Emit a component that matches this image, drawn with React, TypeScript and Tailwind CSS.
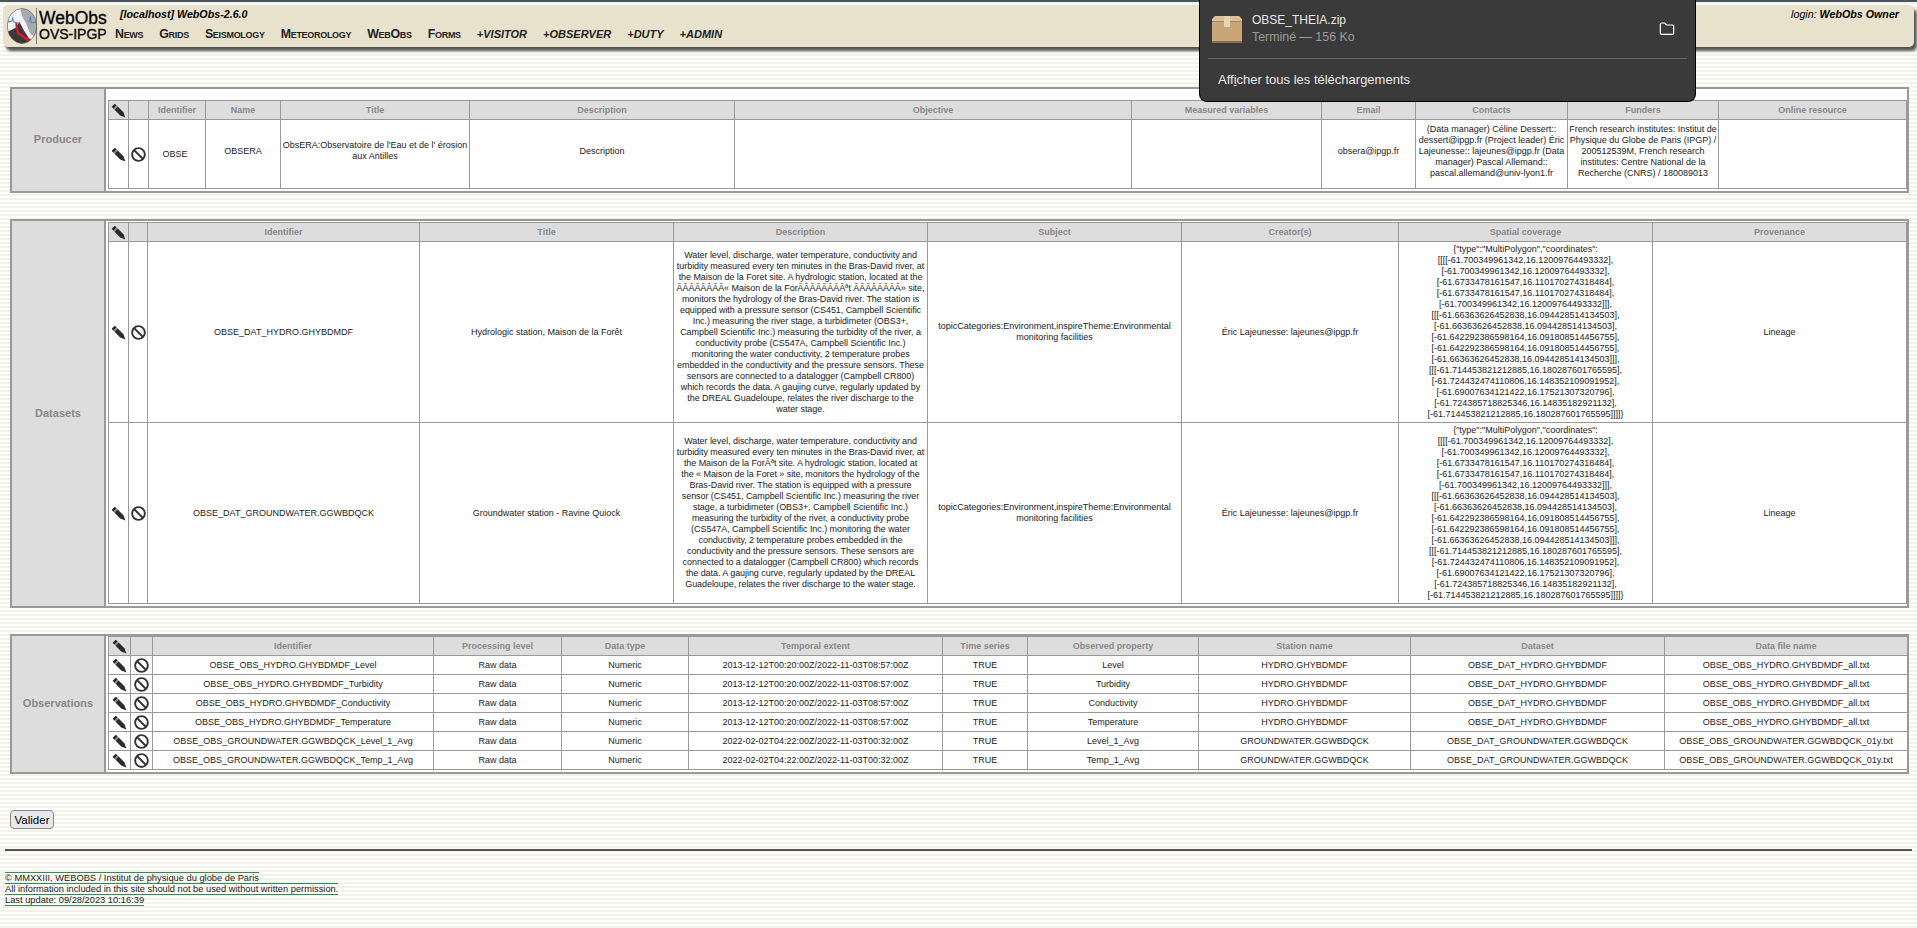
import React from 'react';
import { FaBan } from 'react-icons/fa';
import { Folder } from 'lucide-react';

const CELL = 'border border-[#999] px-[1px] py-0 text-center align-middle';
const NUDGED = 'border border-[#999] px-[1px] pt-0 pb-[6px] text-center align-middle';
const LONG = 'border border-[#999] px-[2px] py-0 text-center align-middle tracking-[-0.06px]';
const HEAD = 'border border-[#999] bg-[#ddd] px-[1px] py-0 text-center align-middle font-bold text-[#888] h-[19px]';

function Edit() {
  return (
    <svg viewBox="0 0 16 16" className="mx-auto block h-[15px] w-[15px]">
      <path d="M4.1 0.7 L0.7 4.1 L2.6 6 L6 2.6 Z" fill="#222" />
      <path d="M6 2.6 L2.6 6 L3.8 7.2 L7.2 3.8 Z" fill="#888" />
      <path d="M7.2 3.8 L3.8 7.2 L9.8 13.2 L15.4 15.4 L13.2 9.8 Z" fill="#2b2b2b" />
    </svg>
  );
}

function Del() {
  return <FaBan className="mx-auto text-[#333]" size={15} />;
}

function Logo() {
  return (
    <svg viewBox="0 0 36 36" className="h-[36px] w-[30px] shrink-0" preserveAspectRatio="none">
      <defs>
        <clipPath id="lg">
          <circle cx="18" cy="18" r="17.5" />
        </clipPath>
      </defs>
      <g clipPath="url(#lg)">
        <rect width="36" height="36" fill="#f4f4f4" />
        <path d="M16 0 L36 0 L36 30 L28 26 L22 14 L18 8 Z" fill="#aaa" />
        <path d="M1 14 L6 13 L7 10 L8 14 L14 15 M25 14 L27 13 L28 8 L29 15 L36 14" fill="none" stroke="#3b8ad8" strokeWidth="1.1" />
        <path d="M0 36 L0 24 L10 20 L15 14 L20 22 L26 30 L36 36 Z" fill="#3a3a3a" />
        <path d="M11 15 L13 25 L27 33" fill="none" stroke="#e0152b" strokeWidth="2.6" />
      </g>
      <circle cx="18" cy="18" r="17.5" fill="none" stroke="#555" strokeWidth="0.7" />
      <rect x="35" y="0" width="1" height="36" fill="#666" />
    </svg>
  );
}

function ZipBox() {
  return (
    <svg viewBox="0 0 30 27" className="h-[27px] w-[30px] shrink-0">
      <path d="M3 0 H27 L30 5 V27 H0 V5 Z" fill="#c9a678" />
      <path d="M0 5 H30 V3 L27 0 H3 L0 3 Z" fill="#dcc09a" />
      <rect x="0" y="5" width="30" height="1" fill="#a98a60" />
      <rect x="12" y="0" width="6" height="11" fill="#e6d4b8" />
      <rect x="0" y="25" width="30" height="2" fill="#8c6f49" />
    </svg>
  );
}

function Section({ label, tall, children }: { label: string; tall: string; children: React.ReactNode }) {
  return (
    <div className={`flex ${tall}`}>
      <div className="flex w-[96px] shrink-0 items-center justify-center border-2 border-[#999] bg-[#ddd] pb-[1px] text-[11px] font-bold text-[#888]">
        {label}
      </div>
      <div className="flex min-w-0 flex-1 flex-col justify-end border-y-2 border-r-2 border-[#999] bg-white px-[2px] pb-[2px]">
        {children}
      </div>
    </div>
  );
}

const producerCols = ['w-[20px]', 'w-[20px]', 'w-[57px]', 'w-[75px]', 'w-[189px]', 'w-[265px]', 'w-[397px]', 'w-[190px]', 'w-[94px]', 'w-[152px]', 'w-[151px]', 'w-[188px]'];
const producerHead = ['Identifier', 'Name', 'Title', 'Description', 'Objective', 'Measured variables', 'Email', 'Contacts', 'Funders', 'Online resource'];

const datasetCols = ['w-[20px]', 'w-[19px]', 'w-[272px]', 'w-[254px]', 'w-[254px]', 'w-[254px]', 'w-[217px]', 'w-[254px]', 'w-[254px]'];
const datasetHead = ['Identifier', 'Title', 'Description', 'Subject', 'Creator(s)', 'Spatial coverage', 'Provenance'];

const coverage = (
  <>
    {'{"type":"MultiPolygon","coordinates":'}
    <br />[[[[-61.700349961342,16.12009764493332],
    <br />[-61.700349961342,16.12009764493332],
    <br />[-61.6733478161547,16.110170274318484],
    <br />[-61.6733478161547,16.110170274318484],
    <br />[-61.700349961342,16.12009764493332]]],
    <br />[[[-61.66363626452838,16.094428514134503],
    <br />[-61.66363626452838,16.094428514134503],
    <br />[-61.642292386598164,16.091808514456755],
    <br />[-61.642292386598164,16.091808514456755],
    <br />[-61.66363626452838,16.094428514134503]]],
    <br />[[[-61.714453821212885,16.180287601765595],
    <br />[-61.724432474110806,16.148352109091952],
    <br />[-61.69007634121422,16.17521307320796],
    <br />[-61.724385718825346,16.14835182921132],
    <br />[-61.714453821212885,16.180287601765595]]]]{'}'}
  </>
);

const datasets = [
  {
    id: 'OBSE_DAT_HYDRO.GHYBDMDF',
    title: 'Hydrologic station, Maison de la Forêt',
    desc: 'Water level, discharge, water temperature, conductivity and turbidity measured every ten minutes in the Bras-David river, at the Maison de la Foret site. A hydrologic station, located at the ÃÂÃÂÃÂÃÂ« Maison de la ForÃÂÃÂÃÂÃÂªt ÃÂÃÂÃÂÃÂ» site, monitors the hydrology of the Bras-David river. The station is equipped with a pressure sensor (CS451, Campbell Scientific Inc.) measuring the river stage, a turbidimeter (OBS3+, Campbell Scientific Inc.) measuring the turbidity of the river, a conductivity probe (CS547A, Campbell Scientific Inc.) monitoring the water conductivity, 2 temperature probes embedded in the conductivity and the pressure sensors. These sensors are connected to a datalogger (Campbell CR800) which records the data. A gaujing curve, regularly updated by the DREAL Guadeloupe, relates the river discharge to the water stage.',
  },
  {
    id: 'OBSE_DAT_GROUNDWATER.GGWBDQCK',
    title: 'Groundwater station - Ravine Quiock',
    desc: (
      <>
        Water level, discharge, water temperature, conductivity and turbidity measured every ten minutes in the Bras-David river, at the Maison de la ForÃªt site. A hydrologic station, located at
        <br />
        the « Maison de la Foret » site, monitors the hydrology of the Bras-David river. The station is equipped with a pressure sensor (CS451, Campbell Scientific Inc.) measuring the river stage, a turbidimeter (OBS3+, Campbell Scientific Inc.) measuring the turbidity of the river, a conductivity probe (CS547A, Campbell Scientific Inc.) monitoring the water conductivity, 2 temperature probes embedded in the conductivity and the pressure sensors. These sensors are connected to a datalogger (Campbell CR800) which records the data. A gaujing curve, regularly updated by the DREAL Guadeloupe, relates the river discharge to the water stage.
      </>
    ),
  },
];

const obsCols = ['w-[22px]', 'w-[22px]', 'w-[281px]', 'w-[128px]', 'w-[127px]', 'w-[254px]', 'w-[85px]', 'w-[171px]', 'w-[212px]', 'w-[254px]', 'w-[243px]'];
const obsHead = ['Identifier', 'Processing level', 'Data type', 'Temporal extent', 'Time series', 'Observed property', 'Station name', 'Dataset', 'Data file name'];

const hydro = ['HYDRO.GHYBDMDF', 'OBSE_DAT_HYDRO.GHYBDMDF', 'OBSE_OBS_HYDRO.GHYBDMDF_all.txt'];
const ground = ['GROUNDWATER.GGWBDQCK', 'OBSE_DAT_GROUNDWATER.GGWBDQCK', 'OBSE_OBS_GROUNDWATER.GGWBDQCK_01y.txt'];
const t1 = '2013-12-12T00:20:00Z/2022-11-03T08:57:00Z';
const t3 = '2022-02-02T04:22:00Z/2022-11-03T00:32:00Z';

const observations = [
  ['OBSE_OBS_HYDRO.GHYBDMDF_Level', t1, 'Level', hydro],
  ['OBSE_OBS_HYDRO.GHYBDMDF_Turbidity', t1, 'Turbidity', hydro],
  ['OBSE_OBS_HYDRO.GHYBDMDF_Conductivity', t1, 'Conductivity', hydro],
  ['OBSE_OBS_HYDRO.GHYBDMDF_Temperature', t1, 'Temperature', hydro],
  ['OBSE_OBS_GROUNDWATER.GGWBDQCK_Level_1_Avg', t3, 'Level_1_Avg', ground],
  ['OBSE_OBS_GROUNDWATER.GGWBDQCK_Temp_1_Avg', t3, 'Temp_1_Avg', ground],
] as const;

const menu = ['News', 'Grids', 'Seismology', 'Meteorology', 'WebObs', 'Forms'];
const plus = ['+VISITOR', '+OBSERVER', '+DUTY', '+ADMIN'];

export default function App() {
  return (
    <div className="relative min-h-[928px] overflow-hidden bg-[repeating-linear-gradient(180deg,#ffffff_0px,#ffffff_2px,#f2f2e8_2px,#f2f2e8_4px)] font-['Liberation_Sans',Arial,sans-serif] text-[9px] leading-[11px] text-[#222]">
      <div className="h-[2px] bg-[#4c5660]" />

      {/* header */}
      <div className="mx-[3px] mt-[3px] flex h-[42px] items-center rounded-[5px] bg-[#e8e2cd] pr-[15px] pl-[4px] shadow-[3px_4px_3px_#555]">
        <Logo />
        <div className="ml-[2px] flex w-[70px] shrink-0 flex-col whitespace-nowrap text-black">
          <span className="text-[17.5px] leading-[17px] [-webkit-text-stroke:0.3px_black]">WebObs</span>
          <span className="text-[14px] leading-[15px] [-webkit-text-stroke:0.3px_black]">OVS-IPGP</span>
        </div>
        <div className="ml-[6px] flex h-full flex-col pt-[3px]">
          <div className="ml-[5px] text-[10.7px] leading-[13px] font-bold text-black italic">[localhost] WebObs-2.6.0</div>
          <div className="mt-[6px] flex gap-[16px] leading-[14px] font-bold text-[#222]">
            {menu.map(m => (
              <span key={m} className="text-[12.4px] tracking-[-0.3px] [font-variant:small-caps]">{m}</span>
            ))}
            {plus.map(m => (
              <span key={m} className="text-[11px] italic">{m}</span>
            ))}
          </div>
        </div>
        <div className="mb-auto ml-auto pt-[3px] text-[10.7px] leading-[13px] text-black italic">
          login: <b>WebObs Owner</b>
        </div>
      </div>

      {/* download panel */}
      <div className="absolute top-0 left-[1199px] h-[102px] w-[497px] rounded-b-[8px] border border-t-0 border-black bg-[#3a3a3a] text-[#e8e8e8]">
        <div className="flex h-[58px] items-center pr-[20px] pl-[12px]">
          <ZipBox />
          <div className="ml-[10px] flex-1">
            <div className="text-[12px] leading-[16px]">OBSE_THEIA.zip</div>
            <div className="text-[12.4px] leading-[18px] text-[#9a9a9a]">Terminé — 156 Ko</div>
          </div>
          <Folder size={16} strokeWidth={1.8} className="text-white" />
        </div>
        <div className="mx-[8px] border-t border-[#666]" />
        <div className="pt-[13px] pl-[18px] text-[13px] leading-[16px]">
          Aff<span className="underline">i</span>cher tous les téléchargements
        </div>
      </div>

      <main className="flex flex-col gap-[26px] pt-[40px] pr-[8px] pl-[10px]">
        <Section label="Producer" tall="h-[106px]">
          <table className="w-full table-fixed border-collapse">
            <colgroup>
              {producerCols.map((c, i) => <col key={i} className={c} />)}
            </colgroup>
            <thead>
              <tr>
                <th className={HEAD}><Edit /></th>
                <th className={HEAD} />
                {producerHead.map(h => <th key={h} className={HEAD}>{h}</th>)}
              </tr>
            </thead>
            <tbody>
              <tr className="h-[69px]">
                <td className={CELL}><Edit /></td>
                <td className={CELL}><Del /></td>
                <td className="border border-[#999] py-0 pr-[4px] pl-0 text-center align-middle">OBSE</td>
                <td className={NUDGED}>OBSERA</td>
                <td className={NUDGED}>ObsERA:Observatoire de l'Eau et de l' érosion aux Antilles</td>
                <td className={NUDGED}>Description</td>
                <td className={CELL} />
                <td className={CELL} />
                <td className={NUDGED}>obsera@ipgp.fr</td>
                <td className={NUDGED}>(Data manager) Céline Dessert:: dessert@ipgp.fr (Project leader) Éric Lajeunesse:: lajeunes@ipgp.fr (Data manager) Pascal Allemand:: pascal.allemand@univ-lyon1.fr</td>
                <td className={NUDGED}>French research institutes: Institut de Physique du Globe de Paris (IPGP) / 200512539M, French research institutes: Centre National de la Recherche (CNRS) / 180089013</td>
                <td className={CELL} />
              </tr>
            </tbody>
          </table>
        </Section>

        <Section label="Datasets" tall="h-[389px]">
          <table className="w-full table-fixed border-collapse">
            <colgroup>
              {datasetCols.map((c, i) => <col key={i} className={c} />)}
            </colgroup>
            <thead>
              <tr>
                <th className={HEAD}><Edit /></th>
                <th className={HEAD} />
                {datasetHead.map(h => <th key={h} className={HEAD}>{h}</th>)}
              </tr>
            </thead>
            <tbody>
              {datasets.map(d => (
                <tr key={d.id} className="h-[181px]">
                  <td className={CELL}><Edit /></td>
                  <td className={CELL}><Del /></td>
                  <td className={CELL}>{d.id}</td>
                  <td className={CELL}>{d.title}</td>
                  <td className={LONG}>{d.desc}</td>
                  <td className={CELL}>topicCategories:Environment,inspireTheme:Environmental monitoring facilities</td>
                  <td className={CELL}>Éric Lajeunesse: lajeunes@ipgp.fr</td>
                  <td className={CELL}>{coverage}</td>
                  <td className={CELL}>Lineage</td>
                </tr>
              ))}
            </tbody>
          </table>
        </Section>

        <Section label="Observations" tall="h-[140px]">
          <table className="w-full table-fixed border-collapse">
            <colgroup>
              {obsCols.map((c, i) => <col key={i} className={c} />)}
            </colgroup>
            <thead>
              <tr>
                <th className={HEAD}><Edit /></th>
                <th className={HEAD} />
                {obsHead.map(h => <th key={h} className={HEAD}>{h}</th>)}
              </tr>
            </thead>
            <tbody>
              {observations.map(o => (
                <tr key={o[0]} className="h-[19px]">
                  <td className={CELL}><Edit /></td>
                  <td className={CELL}><Del /></td>
                  <td className={CELL}>{o[0]}</td>
                  <td className={CELL}>Raw data</td>
                  <td className={CELL}>Numeric</td>
                  <td className={CELL}>{o[1]}</td>
                  <td className={CELL}>TRUE</td>
                  <td className={CELL}>{o[2]}</td>
                  <td className={CELL}>{o[3][0]}</td>
                  <td className={CELL}>{o[3][1]}</td>
                  <td className={CELL}>{o[3][2]}</td>
                </tr>
              ))}
            </tbody>
          </table>
        </Section>
      </main>

      <div className="pt-[36px] pl-[10px]">
        <button className="h-[19px] w-[44px] rounded-[4px] border border-[#888] bg-[#e9e9ed] text-[11.5px] leading-[14px] text-black">
          Valider
        </button>
      </div>

      <div className="mx-[5px] mt-[20px] h-[2px] bg-[#555]" />

      <div className="pt-[22px] pl-[5px] text-[9.3px] leading-[11px]">
        <span className="box-decoration-clone border-y border-[#2e8b57]">
          © MMXXIII, WEBOBS / Institut de physique du globe de Paris
          <br />
          All information included in this site should not be used without written permission.
          <br />
          Last update: 09/28/2023 10:16:39
        </span>
      </div>
    </div>
  );
}
